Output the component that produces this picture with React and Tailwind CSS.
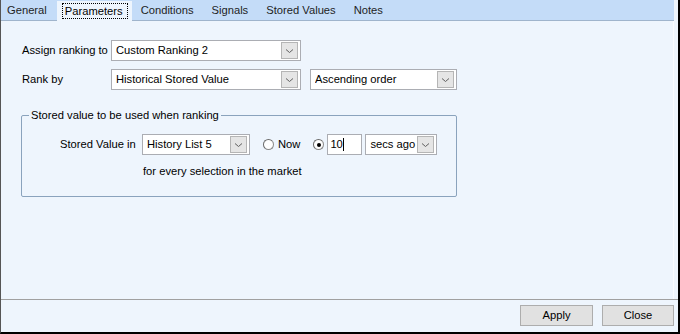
import React from "react";

const font = { fontFamily: '"Liberation Sans", Arial, sans-serif' };

function Chevron() {
  return (
    <svg width="9" height="6" viewBox="0 0 9 6">
      <path d="M1 1.5 L4.5 4.5 L8 1.5" fill="none" stroke="#606060" strokeWidth="1" />
    </svg>
  );
}

function Select({ value, className }) {
  return (
    <div
      className={`flex items-center shrink-0 h-[21px] bg-white border border-[#abadb3] pl-[4px] pr-[2px] ${className}`}
    >
      <span className="flex-1 leading-none whitespace-nowrap overflow-hidden">{value}</span>
      <div className="w-[17px] h-[17px] shrink-0 flex items-center justify-center bg-[#e5e5e5] border border-[#b5b5b5]">
        <Chevron />
      </div>
    </div>
  );
}

function Radio({ checked }) {
  return (
    <div className="w-[11px] h-[11px] shrink-0 rounded-full border border-[#8a8a8a] border-t-[#6a6a6a] border-l-[#6a6a6a] bg-white flex items-center justify-center">
      {checked && <div className="w-[4px] h-[4px] rounded-full bg-black" />}
    </div>
  );
}

const tabs = ["General", "Parameters", "Conditions", "Signals", "Stored Values", "Notes"];

export default function App() {
  return (
    <div
      style={font}
      className="w-[680px] h-[334px] flex flex-col bg-[#eef5fd] border-l border-l-[#555] border-r-2 border-b-2 border-black text-black text-[11.2px]"
    >
      <div className="h-[21px] flex items-end bg-[#c4dcf8] border-b border-[#9fb4cc] mr-[4px]">
        {tabs.map((t) =>
          t === "Parameters" ? (
            <div key={t} className="h-[20px] pl-[5px] pr-[4px] pt-[2px] bg-[#eef5fd] -mb-px">
              <div className="border border-dotted border-black pl-[2px] pr-[4px] h-[16px] leading-[14px] whitespace-nowrap">{t}</div>
            </div>
          ) : (
            <div key={t} className="h-[20px] px-[9px] leading-[20px] text-[#1e1e1e] whitespace-nowrap first:pl-[6px] first:pr-[10px]">
              {t}
            </div>
          )
        )}
      </div>

      <div className="flex-1 flex flex-col pt-[19px] pl-[20px] mr-[4px] border-r border-[#fafcff]">
        <div className="flex items-center h-[21px]">
          <span className="w-[90px] shrink-0 pl-[1px] whitespace-nowrap">Assign ranking to</span>
          <Select value="Custom Ranking 2" className="w-[190px]" />
        </div>
        <div className="flex items-center h-[21px] mt-[8px]">
          <span className="w-[90px] shrink-0 pl-[1px] whitespace-nowrap">Rank by</span>
          <Select value="Historical Stored Value" className="w-[190px]" />
          <Select value="Ascending order" className="w-[147px] ml-[9px]" />
        </div>

        <div className="relative w-[436px] h-[82px] mt-[25px] border border-[#8aa3bd] rounded-[2px]">
          <span className="absolute -top-[8px] left-[7px] px-[2px] bg-[#eef5fd] leading-[14px] whitespace-nowrap">
            Stored value to be used when ranking
          </span>
          <div className="flex items-center h-[21px] mt-[18px] pl-[38px]">
            <span className="w-[82px] shrink-0 whitespace-nowrap">Stored Value in</span>
            <Select value="History List 5" className="w-[108px]" />
            <div className="flex items-center gap-[4px] ml-[13px]">
              <Radio />
              <span>Now</span>
            </div>
            <div className="ml-[13px]">
              <Radio checked />
            </div>
            <div className="ml-[3px] w-[35px] h-[21px] shrink-0 bg-white border border-[#abadb3] flex items-center pl-[2px]">
              <span className="leading-none">10</span>
              <span className="w-px h-[13px] bg-black" />
            </div>
            <Select value="secs ago" className="w-[72px] ml-[3px]" />
          </div>
          <div className="pl-[121px] mt-[8px] whitespace-nowrap">for every selection in the market</div>
        </div>

        <div className="flex-1" />
      </div>

      <div className="h-[33px] border-t border-[#a0a0a0] flex items-start justify-end pt-[5px] pr-[4px] gap-[9px]">
        <button className="w-[73px] h-[21px] bg-[#e1e1e1] border border-[#adadad] text-[11.2px] text-black">Apply</button>
        <button className="w-[72px] h-[21px] bg-[#e1e1e1] border border-[#adadad] text-[11.2px] text-black">Close</button>
      </div>
    </div>
  );
}
